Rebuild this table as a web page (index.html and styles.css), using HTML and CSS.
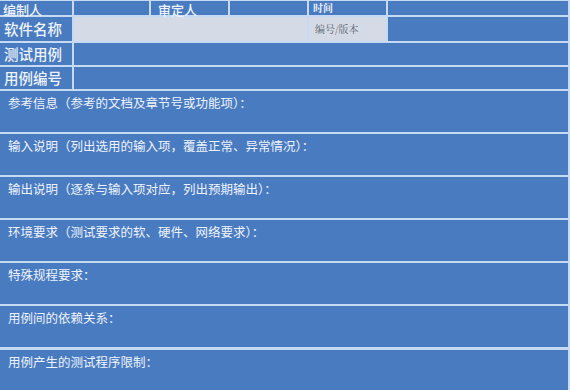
FILE: index.html
```html
<!DOCTYPE html>
<html lang="zh-CN">
<head>
    <meta charset="UTF-8">
    <title>测试用例</title>
    <link rel="stylesheet" href="styles.css">
</head>
<body>
    <div class="sheet">
        <div class="row row-head">
            <div class="cell label-big w-label">编制人</div>
            <div class="cell w-a"></div>
            <div class="cell label-big w-b">审定人</div>
            <div class="cell w-b"></div>
            <div class="cell small-bold w-b">时间</div>
            <div class="cell grow"></div>
        </div>
        <div class="row row-name">
            <div class="cell label w-label">软件名称</div>
            <div class="cell gray w-mid"></div>
            <div class="cell gray serif w-b">编号/版本</div>
            <div class="cell grow"></div>
        </div>
        <div class="row row-short">
            <div class="cell label w-label">测试用例</div>
            <div class="cell grow"></div>
        </div>
        <div class="row row-short">
            <div class="cell label w-label">用例编号</div>
            <div class="cell grow"></div>
        </div>
        <div class="row row-tall"><div class="cell note grow">参考信息（参考的文档及章节号或功能项）：</div></div>
        <div class="row row-tall"><div class="cell note grow">输入说明（列出选用的输入项，覆盖正常、异常情况）：</div></div>
        <div class="row row-tall"><div class="cell note grow">输出说明（逐条与输入项对应，列出预期输出）：</div></div>
        <div class="row row-tall"><div class="cell note grow">环境要求（测试要求的软、硬件、网络要求）：</div></div>
        <div class="row row-tall"><div class="cell note grow">特殊规程要求：</div></div>
        <div class="row row-tall"><div class="cell note grow">用例间的依赖关系：</div></div>
        <div class="row row-last"><div class="cell note grow">用例产生的测试程序限制：</div></div>
    </div>
</body>
</html>
```

FILE: styles.css
```css
html, body {
    margin: 0;
    padding: 0;
}
body {
    font-family: "Noto Sans CJK SC", "Noto Sans", sans-serif;
    background: #c8dcf4;
}
.sheet {
    width: 570px;
    height: 390px;
    box-sizing: border-box;
    padding: 1px 2px 0 0;
    display: flex;
    flex-direction: column;
    gap: 2px;
    background: #c6daf3;
    overflow: hidden;
}
.row {
    display: flex;
    gap: 2px;
}
.row-head {
    height: 14px;
    position: relative;
    z-index: 1;
}
.row-name { height: 24px; }
.row-short { height: 22px; }
.row-tall { height: 41px; }
.row-last {
    flex: 1;
    margin-top: 1px;
}
.cell {
    background: #497bc1;
    color: #eef3fb;
    box-sizing: border-box;
    overflow: hidden;
    white-space: nowrap;
}
.w-label { width: 72px; }
.w-a { width: 75px; }
.w-b { width: 77px; }
.w-mid { width: 233px; }
.grow { flex: 1; }

.gray {
    background: #d5dbe6;
}
/* header text sits low and runs a little past its short row */
.label-big {
    font-size: 13px;
    line-height: 14px;
    font-weight: 500;
    padding: 2px 0 0 3px;
    overflow: visible;
}
.row-head .label-big.w-b {
    padding-left: 7px;
}
.label {
    font-size: 14.5px;
    line-height: 22px;
    font-weight: 500;
    padding-left: 4px;
}
.row-name .label {
    line-height: 24px;
}
.small-bold {
    font-family: "Noto Serif CJK SC", "Liberation Serif", serif;
    font-weight: bold;
    font-size: 10px;
    line-height: 12px;
    padding: 1px 0 0 4px;
}
.serif {
    font-family: "Noto Serif CJK SC", "Liberation Serif", serif;
    color: #555b66;
    font-size: 10px;
    line-height: 24px;
    padding-left: 6px;
}
.note {
    font-size: 12.5px;
    line-height: 16px;
    padding: 4px 0 0 8px;
}
```
